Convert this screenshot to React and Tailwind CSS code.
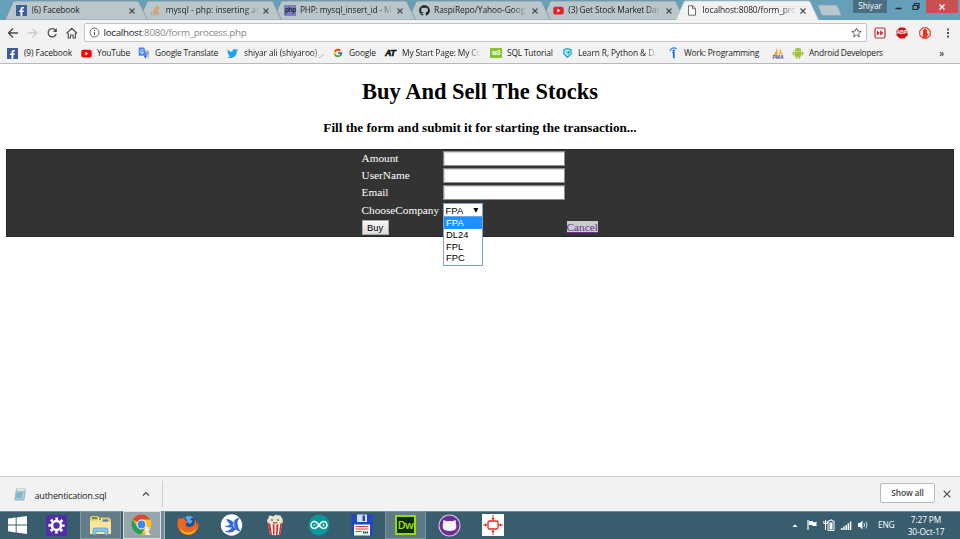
import React from 'react';
import { FaFacebookF, FaTwitter, FaGithub } from 'react-icons/fa';
import { FcGoogle } from 'react-icons/fc';

const Facebook = () => (
  <span className="flex h-[11px] w-[11px] items-end justify-end bg-[#3f5b99] pr-[1px] text-white">
    <FaFacebookF size={9} />
  </span>
);

const StackOverflow = () => (
  <svg width="11" height="11" viewBox="0 0 11 11" fill="none">
    <path d="M1.5 7v3h7V7" stroke="#b9a99a" strokeWidth="1" />
    <path d="M3 8.5h4.3M3.1 6.6l4.3.7M3.7 4.4l4 1.7M5 2.3l3.3 2.8M7 .6l2 3.4" stroke="#e8964e" strokeWidth="1.2" />
  </svg>
);

const Php = () => (
  <span className="flex h-[11px] w-[12px] items-center justify-center bg-[#7a80bd] font-['Liberation_Sans',sans-serif] text-[6.500px] font-bold leading-none tracking-[-0.4px] text-[#20243f]">
    php
  </span>
);

const YouTube = ({ color = '#f00' }) => (
  <svg width="11" height="11" viewBox="0 0 11 11">
    <rect x="0.3" y="1.8" width="10.4" height="7.6" rx="1.9" fill={color} />
    <path d="M4.3 3.8v3.6l3-1.8z" fill="#fff" />
  </svg>
);

const Page = () => (
  <svg width="10" height="11" viewBox="0 0 10 11" fill="#fff" stroke="#5c5c5c" strokeWidth="0.9">
    <path d="M1.5.8h4.2l2.8 2.8v6.6h-7z" />
    <path d="M5.5.8v3h3" fill="none" />
  </svg>
);

const Translate = () => (
  <svg width="12" height="12" viewBox="0 0 12 12">
    <path d="M5 3h6.3v8.5H7.2z" fill="#cfd3d8" />
    <path d="M.6.5h5.6l2.6 8.3H.6z" fill="#4b86ee" />
    <path d="M7.2 11.5l1.6-2.7H5.9z" fill="#3059a8" />
    <path d="M5.5 3.7A1.7 1.7 0 1 0 5.6 5.3H4" fill="none" stroke="#fff" strokeWidth="0.8" />
    <path d="M8 5.4h3M9.4 4.7v.7M10.4 5.4Q10 7.300 8.300 8.300M8.500 6.400Q9.200 7.800 10.600 8.400" fill="none" stroke="#6a7c92" strokeWidth="0.6" />
  </svg>
);

const W3 = () => (
  <span className="flex h-[10px] w-[12px] items-center justify-center bg-[#86c32f] font-['Liberation_Sans',sans-serif] text-[6.500px] font-bold leading-none tracking-[-0.3px] text-white">
    w3
  </span>
);

const AT = () => (
  <span className="font-['Liberation_Sans',sans-serif] text-[9px] font-bold italic leading-none tracking-[-0.6px] text-black [-webkit-text-stroke:0.4px_black]">
    AT
  </span>
);

const Shield = () => (
  <svg width="9" height="10" viewBox="0 0 9 10">
    <path d="M.9 1.800L4.500.600l3.600 1.200v4L4.500 9.300.900 5.800z" fill="#d9f2f8" stroke="#1ca7c7" strokeWidth="1.3" strokeLinejoin="round" />
    <path d="M4.600 3.200L6.500 2.500v2.600L4.600 7z" fill="#1b9cbd" />
    <path d="M2.800 3.500l1.800 1" stroke="#1ca7c7" strokeWidth="0.9" />
  </svg>
);

const Indeed = () => (
  <svg width="9" height="12" viewBox="0 0 9 12">
    <path d="M.9 4Q2 .900 4.800.900 6.500.900 7.700 2.200" fill="none" stroke="#3b8bea" strokeWidth="1.200" />
    <circle cx="4.800" cy="3.600" r="1.200" fill="#2164f3" />
    <path d="M3.300 5.500h1.500v5.700" fill="none" stroke="#2164f3" strokeWidth="1.700" />
  </svg>
);

const Pma = () => (
  <span className="flex w-[12px] flex-col items-center">
    <svg width="11" height="7" viewBox="0 0 11 7">
      <path d="M3.800 0Q5.200 3.500 4.400 6.800L.500 6.600Q3.500 4 3.800 0z" fill="#f59a1c" />
      <path d="M6.500.600Q9.500 3.500 9.500 6.500L5.500 6.800Q7.300 4 6.500.600z" fill="#f3b04c" />
    </svg>
    <span className="font-['Liberation_Sans',sans-serif] text-[5px] font-bold italic leading-[4px] text-[#4b4f86]">PMA</span>
  </span>
);

const Android = () => (
  <svg width="12" height="12" viewBox="0 0 12 12" fill="#9ac32f">
    <path d="M2.700 4a3.300 2.900 0 0 1 6.600 0z" />
    <path d="M3.500.500l1 1.400M8.500.500l-1 1.400" stroke="#9ac32f" strokeWidth="0.500" />
    <rect x="2.700" y="4.500" width="6.600" height="5" rx="0.600" />
    <rect x="0.700" y="4.500" width="1.500" height="4" rx="0.700" />
    <rect x="9.800" y="4.500" width="1.500" height="4" rx="0.700" />
    <rect x="3.900" y="8.500" width="1.500" height="3.200" rx="0.700" />
    <rect x="6.600" y="8.500" width="1.500" height="3.200" rx="0.700" />
    <circle cx="4.600" cy="2.700" r="0.350" fill="#fff" />
    <circle cx="7.400" cy="2.700" r="0.350" fill="#fff" />
  </svg>
);

const Cross = ({ size = 6, color = '#454b4e', stroke = 1.1 }) => (
  <svg width={size} height={size} viewBox="0 0 6 6" stroke={color} strokeWidth={stroke}>
    <path d="M.5.5l5 5M5.500.500l-5 5" />
  </svg>
);

const FADE = '[mask-image:linear-gradient(to_right,black_84%,transparent)]';

const tabs = [
  { icon: <Facebook />, title: '(6) Facebook', text: 'tracking-[-0.1px]', z: 'z-[5]' },
  { icon: <StackOverflow />, title: 'mysql - php: inserting an', text: 'tracking-[-0.030px] ' + FADE, z: 'z-[4]' },
  { icon: <Php />, title: 'PHP: mysql_insert_id - M', text: 'tracking-[-0.160px] ' + FADE, z: 'z-[3]' },
  { icon: <FaGithub size={11} color="#1b1f23" />, title: 'RaspiRepo/Yahoo-Goog', text: 'tracking-[-0.05px] ' + FADE, z: 'z-[2]' },
  { icon: <YouTube color="#e3222b" />, title: '(3) Get Stock Market Dat', text: 'tracking-[-0.150px] ' + FADE, z: 'z-[1]' },
  { icon: <Page />, title: 'localhost:8080/form_pro', text: 'tracking-[-0.100px] ' + FADE, active: true, z: 'z-10' },
];

function Tab({ icon, title, text, active, z }) {
  return (
    <div className={'relative -mr-[8.300px] h-5 w-[142.500px] shrink-0 ' + z}>
      <svg className="absolute inset-0" width="143" height="20" viewBox="0 0 143 20">
        <path
          d="M0 20L8 2Q8.500 1 10 1H132Q133.500 1 134 2L142.500 20z"
          fill={active ? '#f2f2f2' : '#b9c7cd'}
          stroke={active ? '#c4cdd0' : '#7e949e'}
          strokeWidth="0.800"
        />
        {active && <path d="M1 20h140" stroke="#f2f2f2" strokeWidth="1.500" />}
      </svg>
      <div className="relative flex h-full items-center pl-[11px] pt-[1px]">
        <span className="flex w-[15.500px] shrink-0">{icon}</span>
        <span className={'w-[93px] shrink-0 overflow-hidden whitespace-nowrap text-[8.400px] ' + text}>{title}</span>
        <span className="ml-[4.500px]"><Cross /></span>
      </div>
    </div>
  );
}

const bookmarks = [
  { icon: <Facebook />, iw: 'w-[17px]', label: '(9) Facebook', w: 'w-[57px]', t: '' },
  { icon: <YouTube />, iw: 'w-[16px]', label: 'YouTube', w: 'w-[41px]', t: 'tracking-[-0.200px]' },
  { icon: <Translate />, iw: 'w-[17px]', label: 'Google Translate', w: 'w-[72px]', t: 'tracking-[-0.180px]' },
  { icon: <FaTwitter size={11} color="#1da1f2" />, iw: 'w-[17px]', label: 'shiyar ali (shiyaroo) تر', w: 'w-[81px]', t: FADE, gap: 'mr-[8px]' },
  { icon: <FcGoogle size={10} />, iw: 'w-[16px]', label: 'Google', w: 'w-[36px]', t: '' },
  { icon: <AT />, iw: 'w-[17px]', label: 'My Start Page: My Co', w: 'w-[79px]', t: 'tracking-[-0.150px] ' + FADE, gap: 'mr-[9px]' },
  { icon: <W3 />, iw: 'w-[17px]', label: 'SQL Tutorial', w: 'w-[56px]', t: 'tracking-[-0.180px]' },
  { icon: <Shield />, iw: 'w-[15px]', label: 'Learn R, Python & Da', w: 'w-[79px]', t: FADE, gap: 'mr-[12px]' },
  { icon: <Indeed />, iw: 'w-[15px]', label: 'Work: Programming', w: 'w-[79px]', t: 'tracking-[-0.200px]', gap: 'mr-[9px]' },
  { icon: <Pma />, iw: 'w-[20px]', label: '', w: 'w-0', t: '' },
  { icon: <Android />, iw: 'w-[17px]', label: 'Android Developers', w: 'w-[80px]', t: 'tracking-[-0.200px]' },
];

function Toolbar() {
  return (
    <div className="flex h-[23px] items-center bg-[#f2f2f2] pl-[8px] pt-[2px]">
      <svg width="72" height="14" viewBox="0 0 72 14" fill="none" strokeWidth="1.300">
        <path d="M10 7H.800M5 2.500L.500 7 5 11.500" stroke="#4c4c4c" />
        <path d="M19.500 7h9M24.500 2.800L28.700 7l-4.200 4.200" stroke="#cbcbcb" />
        <path d="M47.500 4.200A4.100 4.100 0 1 0 48.200 8" stroke="#4c4c4c" />
        <path d="M48.800 2v4h-4z" fill="#4c4c4c" />
        <path d="M58.500 7.500L63.800 2.300l5.300 5.200M60.200 7v5h2.300V9h2.600v3h2.300V7" stroke="#4c4c4c" strokeWidth="1.100" />
      </svg>
      <div className="ml-[4px] flex h-[19px] w-[783px] items-center rounded-[2px] border border-[#c3c3c3] bg-white pl-[4px] pr-[4px]">
        <svg width="11" height="11" viewBox="0 0 11 11" fill="none" stroke="#555">
          <circle cx="5.500" cy="5.500" r="4.500" strokeWidth="0.900" />
          <path d="M5.500 5v3.200M5.500 2.700v1.200" strokeWidth="1.100" />
        </svg>
        <span className="ml-[3.500px] pt-[1px] text-[9.800px] tracking-[-0.300px] text-[#888]">
          <span className="text-[#222]">localhost</span>:8080/form_process.php
        </span>
        <svg className="ml-auto" width="11" height="11" viewBox="0 0 11 11" fill="none" stroke="#555" strokeWidth="0.900">
          <path d="M5.500 1l1.300 3.100 3.400.300-2.600 2.200.800 3.300-2.900-1.800-2.900 1.800.800-3.300L.800 4.400l3.400-.300z" />
        </svg>
      </div>
      <svg className="ml-[7px]" width="12" height="12" viewBox="0 0 12 12">
        <rect x="1" y="1" width="10" height="10" rx="1.500" fill="#fff" stroke="#c2272f" strokeWidth="1.200" />
        <path d="M2.800 3.200L5.900 6 2.800 8.800zM6.200 3.200L9.300 6 6.200 8.800z" fill="#c2272f" />
      </svg>
      <span className="relative ml-[10px] flex h-[12px] w-[12px] items-center justify-center">
        <svg className="absolute inset-0" width="12" height="12" viewBox="0 0 12 12">
          <path d="M3.700.500h4.600l3.200 3.200v4.600l-3.200 3.200H3.700L.500 8.300V3.700z" fill="#cb1414" />
        </svg>
        <span className="relative font-['Liberation_Sans',sans-serif] text-[5px] font-bold leading-none tracking-[-0.1px] text-white">ABP</span>
      </span>
      <svg className="ml-[11px]" width="12" height="12" viewBox="0 0 12 12">
        <path d="M4 .800h4l3.200 3.200v4L8 11.200H4L.800 8V4z" fill="#fff" stroke="#ea3323" strokeWidth="1.200" />
        <path d="M4 6.200V3h1V2h2v.700h1V6.800l1-.800.600.500L8 9.500 7 11.200H4.500L3.500 9z" fill="#ea3323" />
      </svg>
      <svg className="ml-[14.500px]" width="4" height="12" viewBox="0 0 4 12" fill="#555">
        <rect x="1" y="1.500" width="2" height="2" /><rect x="1" y="5" width="2" height="2" /><rect x="1" y="8.500" width="2" height="2" />
      </svg>
    </div>
  );
}

const labelCell = 'flex h-[17.300px] items-center';

function Field({ label }) {
  return (
    <div className={labelCell}>
      <span className="w-[81px] leading-none">{label}</span>
      <input aria-label={label} className="h-[15px] w-[122px] border border-[#8b8b8b] bg-white shadow-[inset_1px_1px_0_#d8d8d8]" />
    </div>
  );
}

function Content() {
  const options = ['FPA', 'DL24', 'FPL', 'FPC'];
  return (
    <main className="h-[412px] bg-white px-[5.600px] pt-[15px] font-['Liberation_Serif','Times_New_Roman',serif] text-black">
      <h1 className="text-center text-[22.500px] font-bold leading-[26px]">Buy And Sell The Stocks</h1>
      <h3 className="mt-[15px] text-center text-[13.160px] font-bold leading-[15px]">Fill the form and submit it for starting the transaction...</h3>
      <div className="mt-[14px] h-[87.500px] w-[948.500px] bg-[#333] pl-[356px] pt-[0.700px] text-[11.250px] text-white shadow-[inset_0_0_0_1px_#262626]">
        <Field label="Amount" />
        <Field label="UserName" />
        <Field label="Email" />
        <div className={labelCell}>
          <span className="w-[81px] leading-none">ChooseCompany</span>
          <div className="relative flex h-[14px] w-[40px] items-center justify-between border border-[#7ba2dc] bg-white pl-[2px] pr-[3px] font-['Liberation_Sans',Arial,sans-serif] text-[9.400px] leading-none text-black">
            <span>FPA</span>
            <svg width="6" height="5" viewBox="0 0 6 5"><path d="M.400 0h5L2.900 4.800z" fill="#000" /></svg>
            <ul className="absolute -left-px top-[12px] z-10 w-[40px] border border-[#7ba2dc] bg-white pb-[1px]">
              {options.map((o, i) => (
                <li key={o} className={'flex h-[11.600px] items-center pl-[2.500px] ' + (i === 0 ? 'bg-[#1e90ff] text-white' : '')}>{o}</li>
              ))}
            </ul>
          </div>
        </div>
        <div className="flex h-[17px] items-center">
          <button className="flex h-[15px] w-[27px] items-center justify-center border border-[#a8a8a8] bg-linear-to-b from-[#f8f8f8] to-[#dcdcdc] font-['Liberation_Sans',Arial,sans-serif] text-[9.400px] leading-none text-black">Buy</button>
          <a className="ml-[178px] bg-[#ccc] leading-[12px] text-[#6a2f9c] underline">Cancel</a>
        </div>
      </div>
    </main>
  );
}

const Windows = () => (
  <svg width="19" height="18" viewBox="0 0 19 18" fill="#fff">
    <path d="M0 2.600l7.700-1.100v7H0zM8.600 1.400L19 0v8.500H8.600zM0 9.400h7.700v7L0 15.300zM8.600 9.400H19V18L8.600 16.500z" />
  </svg>
);

const Gear = () => (
  <svg width="21" height="21" viewBox="0 0 21 21">
    <rect width="21" height="21" fill="#512da8" />
    <circle cx="10.500" cy="10.500" r="4.500" fill="none" stroke="#fff" strokeWidth="2.600" />
    <circle cx="10.500" cy="10.500" r="6.800" fill="none" stroke="#fff" strokeWidth="2.600" strokeDasharray="2.670 2.670" strokeDashoffset="1.330" />
  </svg>
);

const Folder = () => (
  <svg width="23" height="21" viewBox="0 0 23 21">
    <path d="M1 2.500L2 1h7l1 1.500h10.500L22 5v14H1z" fill="#e9c65d" />
    <path d="M3 2h5v2H3z" fill="#45a148" /><path d="M9 3.500h4v2H9z" fill="#fff" /><path d="M10 3.500h2v1.500h-2z" fill="#df4c37" /><path d="M14 4.500h5v2h-5z" fill="#3289c9" />
    <path d="M1 5.500h9l1 1.500h11v12H1z" fill="#f9e69b" />
    <path d="M4 20v-5q0-2 2-2h11q2 0 2 2v5h-3v-3.500H7V20z" fill="#84c5e8" stroke="#4e9ccb" strokeWidth="0.700" />
  </svg>
);

const Chrome = () => (
  <svg width="22" height="22" viewBox="0 0 22 22">
    <circle cx="10.500" cy="10.500" r="10" fill="#fbc116" />
    <path d="M10.500 10.500L1.900 5.400A10 10 0 0 1 19.200 5.600H10.500z" fill="#df4634" />
    <path d="M1.900 5.400A10 10 0 0 0 10 20.500l4.700-7.700L6.400 13z" fill="#279e5b" />
    <circle cx="10.500" cy="10.500" r="4.900" fill="#fff" />
    <circle cx="10.500" cy="10.500" r="3.900" fill="#4285f4" />
    <path d="M16 12.500q2.500-.500 2.500 2.500 0 1.500-1 2.500l2.300 3.500h-6l1-3.300q-1.300-1-1.300-2.700 0-2.200 2.500-2.500z" fill="#eee9df" />
  </svg>
);

const Firefox = () => (
  <svg width="22" height="22" viewBox="0 0 22 22">
    <circle cx="11.500" cy="10" r="9" fill="#1f4e9b" />
    <path d="M8 3Q12 0 17 4q-3-.500-4 1.500 3 1 2 3l-3 1.500z" fill="#5aa9de" />
    <path d="M1.500 3.500Q3 5 5 4.500q1.500-1.500 3-1.500-1.500 2 .500 3.500 2 .500 3 1.500-3 1-3 2.500 1 3 4.500 2.500 3.500-.500 4.500-3.500.800-3 -.500-5.500Q20.500 8 19.500 12q1.800-2.500.800-6 2.200 5 .400 9-3 6-9.700 6Q3 20.500.800 13 0 8 1.500 3.500z" fill="#e8691c" />
    <path d="M2.500 13q3 5.500 9 5.500 5.500-.500 8-5-2 7-8.500 7T2.500 13z" fill="#f7b62b" />
  </svg>
);

const Bird = () => (
  <svg width="23" height="22" viewBox="0 0 23 22">
    <circle cx="11.500" cy="11" r="10.700" fill="#fff" />
    <path d="M6 5q5 0 7.500 3.500Q15 4 20.500 3.500 17 6 17.500 10q.500 4 3 7.500-2.500 0-4.500-2-4 4.500-11.500 2 5-.500 7.500-4-4 .500-8-1.500 4 0 6-1.500Q8 8.500 6 5z" fill="#3468d4" />
    <path d="M14.500 7.500q-1 4.500 1.500 7.500-3-1.500-3.500-4.500z" fill="#a9cdf5" />
  </svg>
);

const Popcorn = () => (
  <svg width="18" height="22" viewBox="0 0 18 22">
    <path d="M1.500 8h15L14 20.500q-5 1.500-10 0z" fill="#fff" />
    <path d="M1.500 8h2.500l2 13-2-.500zM6.500 10h2v11l-1.300-.100zM10.500 10h2l-1 10.900H10zM14.500 8h2L14 20.500l-1.300.300z" fill="#d02f2c" />
    <path d="M2 9Q0 6 2.500 4.500 2 1.500 5 1.500q1 1 3 .500 2-2 4-.500 3-1 3.500 2Q18 6 16 9q-7 3-14 0z" fill="#eee2c9" />
    <path d="M6 5v2M12 5v2M7 8.500q2 1.500 4 0" fill="none" stroke="#50372d" />
  </svg>
);

const Arduino = () => (
  <svg width="22" height="22" viewBox="0 0 22 22" fill="none">
    <circle cx="11" cy="11" r="10.500" fill="#0b969a" />
    <path d="M11 11Q8.500 7.500 6.500 7.500a3.400 3.400 0 0 0 0 7Q8.500 14.500 11 11q2.500-3.500 4.500-3.500a3.400 3.400 0 0 1 0 7Q13.500 14.500 11 11z" stroke="#fff" strokeWidth="1.500" />
    <path d="M5.300 11h2.400M14.300 11h2.400M15.500 9.800v2.400" stroke="#fff" strokeWidth="0.800" />
  </svg>
);

const Floppy = () => (
  <svg width="22" height="22" viewBox="0 0 22 22">
    <path d="M.500.500h20l1 1v20H1.500l-1-1z" fill="#2346c4" />
    <path d="M6 .500h10V8H6z" fill="#d9e0f1" /><path d="M11.500 1.500H14V7h-2.500z" fill="#2346c4" />
    <path d="M3 10.500h16v11H3z" fill="#fafafa" />
    <path d="M4.500 12.500h13M4.500 15h13M4.500 17.500h6" stroke="#db4144" strokeWidth="1" />
    <path d="M12 18.500h5.500" stroke="#333" strokeWidth="2" strokeDasharray="1.300 0.500" />
  </svg>
);

const Github = () => (
  <svg width="23" height="23" viewBox="0 0 23 23">
    <circle cx="11.500" cy="11.500" r="11" fill="#d7c4e5" />
    <circle cx="11.500" cy="11.500" r="10" fill="#6f2d94" />
    <path d="M5.500 6l3 1.300q3-.600 6 0l3-1.300q.700 2 .200 3.300 1.300 2 .500 4.700-1 3-6.700 3t-6.700-3q-.800-2.700.500-4.700-.500-1.300.200-3.300z" fill="#f7f2fa" />
  </svg>
);

const Target = () => (
  <svg width="22" height="22" viewBox="0 0 22 22" fill="#e0281c">
    <rect width="22" height="22" fill="#fff" />
    <rect x="6" y="7" width="10" height="8" rx="1.500" fill="none" stroke="#e0281c" strokeWidth="1.300" />
    <path d="M11 1v4M11 17v4M1 11h3.500M17.500 11H21" stroke="#e0281c" />
    <path d="M9.300 4h3.400L11 6.500zM9.300 18h3.400L11 15.500zM3 9.300v3.400L5.500 11zM19 9.300v3.400L16.500 11z" />
  </svg>
);

const Dreamweaver = () => (
  <span className="flex h-[20px] w-[21px] items-center justify-center border-2 border-[#8fdc12] bg-[#10290a] font-['Open_Sans',sans-serif] text-[10.800px] font-semibold leading-none tracking-[-0.5px] text-[#a5e815]">Dw</span>
);

const slot = 'flex h-full shrink-0 items-center justify-center ';

function Taskbar() {
  return (
    <div className="flex h-[28px] bg-[#385d6d] shadow-[inset_0_1px_0_#6c8995] text-white">
      <span className={slot + 'w-[35px]'}><Windows /></span>
      <span className={slot + 'w-[43px]'}><Gear /></span>
      <span className={slot + 'ml-[2px] w-[41px] border border-[#82969f] bg-[#627d89]'}><Folder /></span>
      <span className={slot + 'ml-[2px] w-[38px] border border-[#d7dfe2] bg-[#96a6ad]'}><Chrome /></span>
      <span className="h-full w-[4px] border-r border-[#aab7bd] bg-[#768d97]" />
      <span className={slot + 'w-[45px]'}><Firefox /></span>
      <span className={slot + 'w-[43px]'}><Bird /></span>
      <span className={slot + 'w-[44px]'}><Popcorn /></span>
      <span className={slot + 'w-[43px]'}><Arduino /></span>
      <span className={slot + 'w-[44px]'}><Floppy /></span>
      <span className={slot + 'ml-[1px] w-[41px] border border-[#7d949e] bg-[#5d7a86]'}><Dreamweaver /></span>
      <span className={slot + 'w-[46px]'}><Github /></span>
      <span className={slot + 'w-[42px]'}><Target /></span>
      <svg className="ml-[278px] mt-[7px] shrink-0" width="81" height="14" viewBox="0 0 81 14" fill="#fff">
        <path d="M.500 9L3 6.300 5.500 9z" />
        <path d="M16 2v10" stroke="#fff" strokeWidth="1.200" />
        <path d="M17 3h4v1.200h2l2-.500-.700 2 .500 2.300h-4.500V7H17z" />
        <path d="M36 3h2V2h2v1h2v9.500h-6z" fill="none" stroke="#fff" />
        <path d="M37.500 4.500h3v7h-3z" />
        <path d="M33.500 2v10M31.800 3v2.500h3.400V3" fill="none" stroke="#fff" />
        <path d="M49 10h1.500v2H49zM51.200 8.500h1.500V12h-1.500zM53.400 7h1.500v5h-1.500zM55.600 5.200h1.500V12h-1.500zM57.800 3.500h1.500V12h-1.500z" />
        <path d="M66 5h2l2.500-2.500v9L68 9h-2z" />
        <path d="M72 5q1.200 2 0 4M74 3.500q2 3.500 0 7" fill="none" stroke="#fff" strokeWidth="0.800" />
      </svg>
      <span className="ml-[5px] mt-[8px] w-[21px] text-[8.400px] leading-[12px] tracking-[-0.2px]">ENG</span>
      <div className="w-[54px] pt-[3px] text-center text-[8.400px] leading-[11.500px] tracking-[-0.150px]">
        <div>7:27 PM</div>
        <div>30-Oct-17</div>
      </div>
    </div>
  );
}

export default function App() {
  return (
    <div className="h-[539px] w-[960px] overflow-hidden bg-white font-['Open_Sans','Noto_Sans',sans-serif] text-[#222]">
      <div className="flex h-5 bg-[#659fba] pl-[5px]">
        {tabs.map((t) => <Tab key={t.title} {...t} />)}
        <svg className="ml-[7px] mt-[4px] shrink-0" width="26" height="13" viewBox="0 0 26 13">
          <path d="M1 1.500Q1 1 2 1h16.500q1.500 0 2 1L24 10.500q.200 1-1 1H6.500q-1.500 0-2-1z" fill="#b9c7cd" stroke="#86a4b1" strokeWidth="0.800" />
        </svg>
        <span className="ml-auto flex h-[13px] w-[34px] items-center justify-center bg-[#4b6f82] text-[8.200px] text-white">Shiyar</span>
        <svg className="ml-[7px] shrink-0" width="32" height="13" viewBox="0 0 32 13" fill="none" stroke="#1e2b31">
          <path d="M1.500 8.500h6" strokeWidth="1.500" />
          <path d="M19 5.500h4.500v4H19zM20.500 5V3.500h4.500V8h-1.500" strokeWidth="1.200" />
        </svg>
        <span className="mr-[2px] flex h-[13px] w-[32px] shrink-0 items-center justify-center bg-[#c75050]"><Cross color="#fff" stroke={1.3} /></span>
      </div>
      <Toolbar />
      <div className="flex h-[21px] items-center border-b border-[#b9b9b9] bg-[#f2f2f2] pl-[7px] text-[8.400px] tracking-[-0.100px]">
        {bookmarks.map((b, i) => (
          <React.Fragment key={i}>
            <span className={'flex shrink-0 items-center ' + b.iw}>{b.icon}</span>
            <span className={'shrink-0 overflow-hidden whitespace-nowrap ' + b.w + ' ' + b.t + ' ' + (b.gap || '')}>{b.label}</span>
          </React.Fragment>
        ))}
        <span className="ml-auto pr-[16px] text-[10px]">»</span>
      </div>
      <Content />
      <div className="flex h-[35px] items-center border-t border-[#d0d0d0] bg-[#f2f2f2]">
        <svg className="ml-[14px]" width="13" height="13" viewBox="0 0 13 13">
          <path d="M2.500 1h9L10 12H.800z" fill="#a9d2dd" stroke="#8a9da4" strokeWidth="0.700" />
          <path d="M3 1h8.500l-.300 1.500H2.800z" fill="#e5eef1" /><path d="M2.500 5L9 3.500 8 10H1.800z" fill="#79b9cc" />
        </svg>
        <span className="ml-[7.500px] w-[107.500px] pt-[3px] text-[9.100px] tracking-[-0.250px]">authentication.sql</span>
        <svg width="8" height="6" viewBox="0 0 8 6" fill="none" stroke="#444" strokeWidth="1.200"><path d="M1 4.500l3-3 3 3" /></svg>
        <span className="ml-[12px] h-[26px] w-px bg-[#cfcfcf]" />
        <button className="-mt-[2px] ml-auto h-[20px] w-[55px] rounded-[2px] border border-[#b9b9b9] bg-[#fdfdfd] text-[8.400px] font-semibold tracking-[-0.150px] text-[#444]">Show all</button>
        <span className="ml-[8px] mr-[9px]"><Cross size={8} stroke={0.9} /></span>
      </div>
      <Taskbar />
    </div>
  );
}
